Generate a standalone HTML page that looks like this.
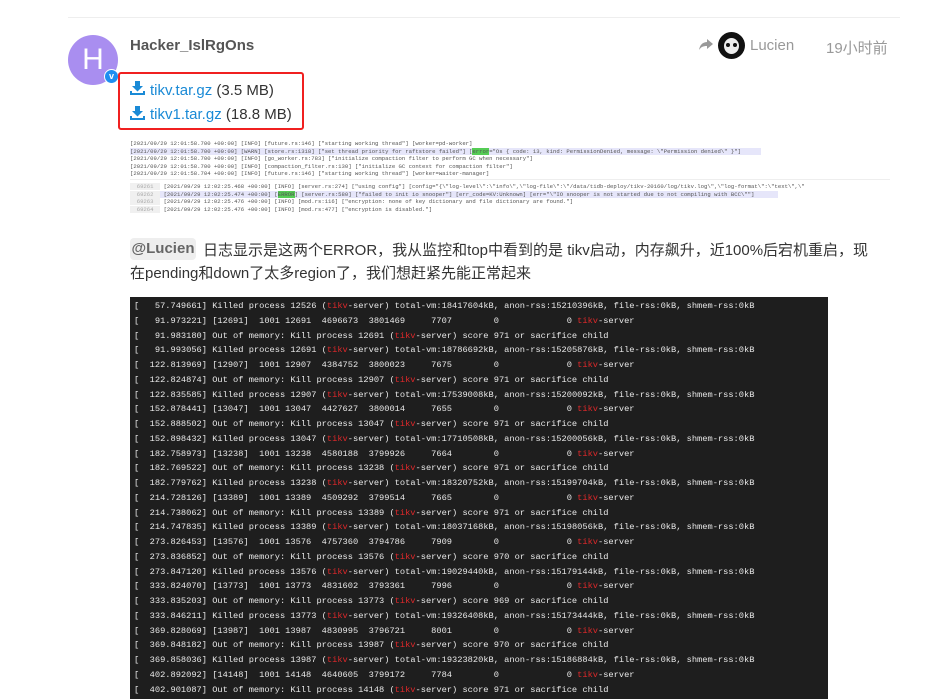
<!DOCTYPE html>
<html><head><meta charset="utf-8">
<style>
body{margin:0;width:934px;height:690px;overflow:hidden;background:#fff;font-family:"Liberation Sans","Noto Sans CJK SC",sans-serif;position:relative}
.abs{position:absolute}
.term{position:absolute;left:130px;top:297px;width:698px;height:400px;background:#1e1e1e;color:#e8e8e8;font-family:"Liberation Mono",monospace;font-size:8.7px;line-height:14.75px;padding-top:2px;overflow:hidden}
.term div{padding-left:4px;white-space:pre;height:14.75px}
.r{color:#e0282a}
.log{position:absolute;font-family:"Liberation Mono",monospace;font-size:5.6px;line-height:7.6px;color:#555;white-space:pre;overflow:hidden}
</style></head><body>
<div class="abs" style="left:68px;top:17px;width:832px;height:1px;background:#eee"></div>
<div class="abs" style="left:68px;top:35px;width:50px;height:50px;border-radius:50%;background:#a98ef0;color:#fff;font-size:30px;line-height:50px;text-align:center">H</div>
<div class="abs" style="left:104px;top:69px;width:13px;height:13px;border-radius:50%;background:#1e8ef0;border:1.5px solid #fff;color:#fff;font-size:9px;line-height:13px;text-align:center;font-weight:bold">v</div>
<div class="abs" style="left:130px;top:37px;font-size:15px;font-weight:bold;color:#555">Hacker_IslRgOns</div>
<svg class="abs" style="left:698px;top:38px" width="16" height="14" viewBox="0 0 16 14"><path d="M9 1 L15 6 L9 11 V8 C5 8 3 9 1 12 C2 7 4 4.5 9 4 Z" fill="#999"/></svg>
<div class="abs" style="left:718px;top:32px;width:27px;height:27px;border-radius:50%;background:#111;overflow:hidden"><div style="position:absolute;left:6px;top:6px;width:15px;height:16px;border-radius:50%;background:#eee"></div><div style="position:absolute;left:8px;top:11px;width:4px;height:4px;border-radius:50%;background:#111"></div><div style="position:absolute;left:15px;top:11px;width:4px;height:4px;border-radius:50%;background:#111"></div></div>
<div class="abs" style="left:750px;top:37px;font-size:15px;color:#999">Lucien</div>
<div class="abs" style="left:826px;top:37px;font-size:15px;color:#999">19小时前</div>
<div class="abs" style="left:118px;top:72px;width:182px;height:54px;border:2px solid #f02020;border-radius:3px"></div>
<svg class="abs" style="left:130px;top:80px" width="15" height="15" viewBox="0 0 15 15"><path d="M5 1h5v5h3l-5.5 5.5L2 6h3z M0 11h2v2h11v-2h2v4H0z" fill="#1a8ad6"/></svg>
<div class="abs" style="left:150px;top:82px;font-size:15px;color:#333"><span style="color:#1a8ad6">tikv.tar.gz</span> (3.5 MB)</div>
<svg class="abs" style="left:130px;top:105px" width="15" height="15" viewBox="0 0 15 15"><path d="M5 1h5v5h3l-5.5 5.5L2 6h3z M0 11h2v2h11v-2h2v4H0z" fill="#1a8ad6"/></svg>
<div class="abs" style="left:150px;top:106px;font-size:15px;color:#333"><span style="color:#1a8ad6">tikv1.tar.gz</span> (18.8 MB)</div>
<div class="log" style="left:130px;top:140px;width:760px;height:39px;border-bottom:1px solid #eee">[2021/09/29 12:01:58.700 +00:00] [INFO] [future.rs:146] ["starting working thread"] [worker=pd-worker]
<span style="background:#e6e6fa">[2021/09/29 12:01:58.700 +00:00] [WARN] [store.rs:1318] ["set thread priority for raftstore failed"] [<span style="background:#5c5">error</span>="Os { code: 13, kind: PermissionDenied, message: \"Permission denied\" }"]      </span>
[2021/09/29 12:01:58.700 +00:00] [INFO] [go_worker.rs:783] ["initialize compaction filter to perform GC when necessary"]
[2021/09/29 12:01:58.700 +00:00] [INFO] [compaction_filter.rs:130] ["initialize GC context for compaction filter"]
[2021/09/29 12:01:58.704 +00:00] [INFO] [future.rs:146] ["starting working thread"] [worker=waiter-manager]</div>
<div class="log" style="left:130px;top:183px;width:760px;height:34px"><span style="color:#aaa;background:#f0f0f0">  69261  </span> [2021/09/29 12:02:25.468 +00:00] [INFO] [server.rs:274] ["using config"] [config="{\"log-level\":\"info\",\"log-file\":\"/data/tidb-deploy/tikv-20160/log/tikv.log\",\"log-format\":\"text\",\"
<span style="color:#aaa;background:#f0f0f0">  69262  </span><span style="background:#e6e6fa"> [2021/09/29 12:02:25.474 +00:00] [<span style="background:#5c5">ERROR</span>] [server.rs:580] ["failed to init io snooper"] [err_code=KV:Unknown] [err="\"IO snooper is not started due to not compiling with BCC\""]       </span>
<span style="color:#aaa;background:#f0f0f0">  69263  </span> [2021/09/29 12:02:25.476 +00:00] [INFO] [mod.rs:116] ["encryption: none of key dictionary and file dictionary are found."]
<span style="color:#aaa;background:#f0f0f0">  69264  </span> [2021/09/29 12:02:25.476 +00:00] [INFO] [mod.rs:477] ["encryption is disabled."]</div>
<div class="abs" style="left:130px;top:238px;width:66px;height:22px;background:#eee;border-radius:4px;font-size:15px;font-weight:bold;color:#666;line-height:22px;text-align:center">@Lucien</div>
<div class="abs" style="left:203px;top:239px;font-size:15px;color:#333;line-height:23px">日志显示是这两个ERROR，我从监控和top中看到的是 tikv启动，内存飙升，近100%后宕机重启，现</div>
<div class="abs" style="left:130px;top:262px;font-size:15px;color:#333;line-height:23px">在pending和down了太多region了，我们想赶紧先能正常起来</div>
<div class="term"><div>[   57.749661] Killed process 12526 (<span class="r">tikv</span>-server) total-vm:18417604kB, anon-rss:15210396kB, file-rss:0kB, shmem-rss:0kB</div><div>[   91.973221] [12691]  1001 12691  4696673  3801469     7707        0             0 <span class="r">tikv</span>-server</div><div>[   91.983180] Out of memory: Kill process 12691 (<span class="r">tikv</span>-server) score 971 or sacrifice child</div><div>[   91.993056] Killed process 12691 (<span class="r">tikv</span>-server) total-vm:18786692kB, anon-rss:15205876kB, file-rss:0kB, shmem-rss:0kB</div><div>[  122.813969] [12907]  1001 12907  4384752  3800023     7675        0             0 <span class="r">tikv</span>-server</div><div>[  122.824874] Out of memory: Kill process 12907 (<span class="r">tikv</span>-server) score 971 or sacrifice child</div><div>[  122.835585] Killed process 12907 (<span class="r">tikv</span>-server) total-vm:17539008kB, anon-rss:15200092kB, file-rss:0kB, shmem-rss:0kB</div><div>[  152.878441] [13047]  1001 13047  4427627  3800014     7655        0             0 <span class="r">tikv</span>-server</div><div>[  152.888502] Out of memory: Kill process 13047 (<span class="r">tikv</span>-server) score 971 or sacrifice child</div><div>[  152.898432] Killed process 13047 (<span class="r">tikv</span>-server) total-vm:17710508kB, anon-rss:15200056kB, file-rss:0kB, shmem-rss:0kB</div><div>[  182.758973] [13238]  1001 13238  4580188  3799926     7664        0             0 <span class="r">tikv</span>-server</div><div>[  182.769522] Out of memory: Kill process 13238 (<span class="r">tikv</span>-server) score 971 or sacrifice child</div><div>[  182.779762] Killed process 13238 (<span class="r">tikv</span>-server) total-vm:18320752kB, anon-rss:15199704kB, file-rss:0kB, shmem-rss:0kB</div><div>[  214.728126] [13389]  1001 13389  4509292  3799514     7665        0             0 <span class="r">tikv</span>-server</div><div>[  214.738062] Out of memory: Kill process 13389 (<span class="r">tikv</span>-server) score 971 or sacrifice child</div><div>[  214.747835] Killed process 13389 (<span class="r">tikv</span>-server) total-vm:18037168kB, anon-rss:15198056kB, file-rss:0kB, shmem-rss:0kB</div><div>[  273.826453] [13576]  1001 13576  4757360  3794786     7909        0             0 <span class="r">tikv</span>-server</div><div>[  273.836852] Out of memory: Kill process 13576 (<span class="r">tikv</span>-server) score 970 or sacrifice child</div><div>[  273.847120] Killed process 13576 (<span class="r">tikv</span>-server) total-vm:19029440kB, anon-rss:15179144kB, file-rss:0kB, shmem-rss:0kB</div><div>[  333.824070] [13773]  1001 13773  4831602  3793361     7996        0             0 <span class="r">tikv</span>-server</div><div>[  333.835203] Out of memory: Kill process 13773 (<span class="r">tikv</span>-server) score 969 or sacrifice child</div><div>[  333.846211] Killed process 13773 (<span class="r">tikv</span>-server) total-vm:19326408kB, anon-rss:15173444kB, file-rss:0kB, shmem-rss:0kB</div><div>[  369.828069] [13987]  1001 13987  4830995  3796721     8001        0             0 <span class="r">tikv</span>-server</div><div>[  369.848182] Out of memory: Kill process 13987 (<span class="r">tikv</span>-server) score 970 or sacrifice child</div><div>[  369.858036] Killed process 13987 (<span class="r">tikv</span>-server) total-vm:19323820kB, anon-rss:15186884kB, file-rss:0kB, shmem-rss:0kB</div><div>[  402.892092] [14148]  1001 14148  4640605  3799172     7784        0             0 <span class="r">tikv</span>-server</div><div>[  402.901087] Out of memory: Kill process 14148 (<span class="r">tikv</span>-server) score 971 or sacrifice child</div></div>
</body></html>
